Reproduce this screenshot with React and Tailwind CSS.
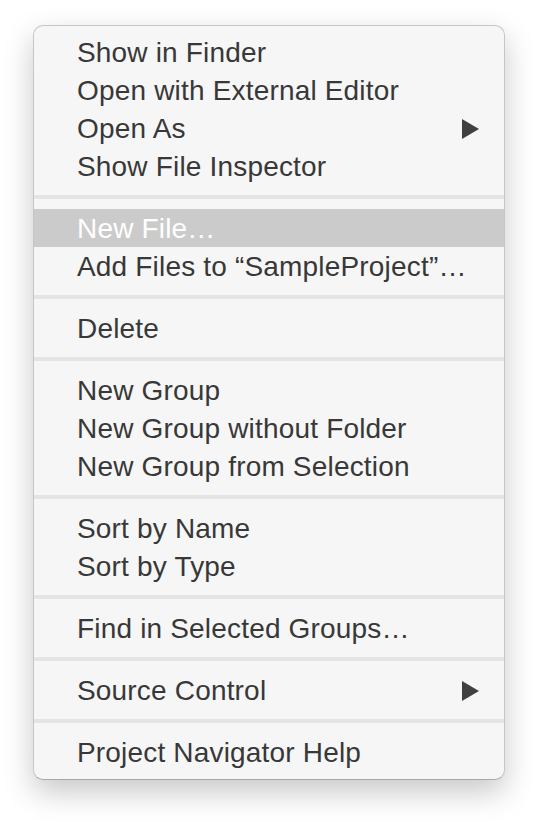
import React from "react";

const groups = [
  [
    { label: "Show in Finder" },
    { label: "Open with External Editor" },
    { label: "Open As", sub: true },
    { label: "Show File Inspector" },
  ],
  [
    { label: "New File…", active: true },
    { label: "Add Files to “SampleProject”…" },
  ],
  [{ label: "Delete" }],
  [
    { label: "New Group" },
    { label: "New Group without Folder" },
    { label: "New Group from Selection" },
  ],
  [{ label: "Sort by Name" }, { label: "Sort by Type" }],
  [{ label: "Find in Selected Groups…" }],
  [{ label: "Source Control", sub: true }],
  [{ label: "Project Navigator Help" }],
];

function Arrow() {
  return (
    <svg width="17" height="20" viewBox="0 0 17 20" className="block">
      <polygon points="0,0 17,10 0,20" fill="#404040" />
    </svg>
  );
}

export default function App() {
  return (
    <div className="w-[538px] h-[822px] bg-white flex flex-col pt-[25px] pl-[33px]">
      <div
        className="w-[472px] h-[755px] bg-[#f6f6f6] rounded-[10px] border border-[#c6c6c6] border-b-[#a9a9a9] shadow-[0_12px_30px_rgba(0,0,0,0.22)] pt-[7px] pb-[8px] flex flex-col"
        style={{ fontFamily: '"Liberation Sans", Arial, sans-serif' }}
      >
        {groups.map((g, gi) => (
          <React.Fragment key={gi}>
            {gi > 0 && (
              <div className="h-[24px] pt-[10px] flex flex-col">
                <div className="h-[4px] bg-[#e4e4e4]" />
              </div>
            )}
            {g.map((it) => (
              <div
                key={it.label}
                className={
                  "h-[38px] flex items-center justify-between pl-[43px] pr-[25px] pt-[2px] text-[28px] leading-none tracking-[0.18px] " +
                  (it.active ? "bg-[#cbcbcb] text-white" : "text-[#383838]")
                }
              >
                <span>{it.label}</span>
                {it.sub && <Arrow />}
              </div>
            ))}
          </React.Fragment>
        ))}
      </div>
    </div>
  );
}
